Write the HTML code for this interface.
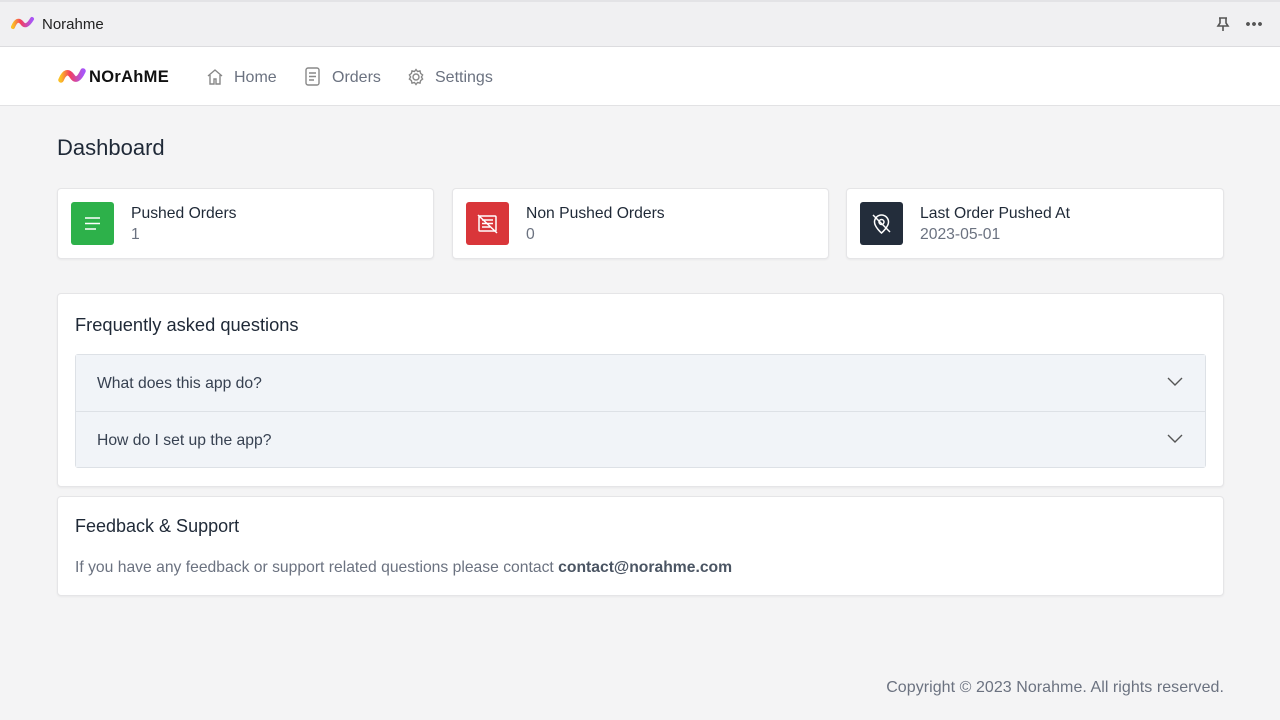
<!DOCTYPE html>
<html><head><meta charset="utf-8"><style>
*{box-sizing:border-box;margin:0;padding:0}
body{width:1280px;height:720px;background:#f4f4f5;font-family:"Liberation Sans",sans-serif;color:#1f2937;position:relative;overflow:hidden}
.top{position:absolute;left:0;top:0;width:1280px;height:47px;background:#f0f0f2;border-top:2px solid #e3e3e6;border-bottom:1px solid #dcdcdf}
.top .t{position:absolute;left:42px;top:14px;font-size:15px;color:#222}
.nav{position:absolute;left:0;top:47px;width:1280px;height:59px;background:#fff;border-bottom:1px solid #e2e2e4}
.nav .item{position:absolute;top:22px;font-size:16px;color:#6b7280}
.nav svg{position:absolute}
h1{position:absolute;left:57px;top:135px;font-size:22px;font-weight:normal;color:#1f2937}
.card{position:absolute;background:#fff;border:1px solid #e5e5e7;border-radius:4px;box-shadow:0 1px 2px rgba(0,0,0,.05)}
.ic{position:absolute;left:13px;top:13px;width:43px;height:43px;border-radius:3px}
.ct{position:absolute;left:73px;top:16px;font-size:15.7px;color:#1f2937}
.cv{position:absolute;left:73px;top:37px;font-size:15.7px;color:#6b7280}
.faq{position:absolute;left:75px;width:1131px;height:57px;background:#f1f4f8;font-size:15.7px;color:#374151}
.faq span{position:absolute;left:22px;top:20px}
.faq svg{position:absolute;right:22px;top:22px}
</style></head><body>
<div class="top">
<svg style="position:absolute;left:11px;top:13px" width="24" height="18" viewBox="0 0 24 18"><defs><linearGradient id="g" x1="0" x2="1"><stop offset="0" stop-color="#fbbf24"/><stop offset=".4" stop-color="#f43f5e"/><stop offset="1" stop-color="#a855f7"/></linearGradient></defs><path d="M2 12 Q6 2 11 8 Q15 14 21 4" stroke="url(#g)" stroke-width="4" fill="none" stroke-linecap="round"/></svg>
<div class="t">Norahme</div>
<svg style="position:absolute;left:1216px;top:14px" width="14" height="16" viewBox="0 0 14 16" fill="none" stroke="#555" stroke-width="1.6"><path d="M3 2h8M4 2v5l-2 3h10l-2-3V2M7 10v5"/></svg>
<div style="position:absolute;left:1245px;top:20px;width:18px;height:4px;background:radial-gradient(circle,#555 1.8px,transparent 2px) 0 0/6px 4px repeat-x"></div>
</div>
<div class="nav">
<svg style="left:58px;top:19px" width="28" height="22" viewBox="0 0 28 22"><path d="M3 14 Q8 2 14 10 Q19 18 25 5" stroke="url(#g)" stroke-width="5.5" fill="none" stroke-linecap="round"/></svg>
<div style="position:absolute;left:89px;top:21px;font-size:16.5px;font-weight:bold;color:#111;letter-spacing:.3px">NOrAhME</div>
<svg style="left:206px;top:21px" width="18" height="18" viewBox="0 0 18 18" fill="none" stroke="#888" stroke-width="1.4"><path d="M2 8 9 2l7 6M4 7v9h4v-5h2v5h4V7"/></svg>
<div class="item" style="left:234px">Home</div>
<svg style="left:305px;top:20px" width="15" height="19" viewBox="0 0 15 19" fill="none" stroke="#888" stroke-width="1.4"><rect x="1" y="1" width="13" height="17" rx="2"/><path d="M4 6h7M4 9.5h7M4 13h5"/></svg>
<div class="item" style="left:332px">Orders</div>
<svg style="left:407px;top:21px" width="18" height="18" viewBox="0 0 18 18" fill="none" stroke="#888" stroke-width="1.4"><circle cx="9" cy="9" r="3"/><path d="M9 1.5l1.5 2 2.5-.6.6 2.5 2 1.5-1.2 2.1 1.2 2.1-2 1.5-.6 2.5-2.5-.6L9 16.5l-1.5-2-2.5.6-.6-2.5-2-1.5L3.6 9 2.4 6.9l2-1.5.6-2.5 2.5.6z"/></svg>
<div class="item" style="left:435px">Settings</div>
</div>
<h1>Dashboard</h1>
<div class="card" style="left:57px;top:188px;width:377px;height:71px"><div class="ic" style="background:#2db14a"><svg width="43" height="43" viewBox="0 0 43 43" stroke="#fff" stroke-width="1.6"><path d="M14 16h15M14 21.5h15M14 27h11"/></svg></div><div class="ct">Pushed Orders</div><div class="cv">1</div></div>
<div class="card" style="left:452px;top:188px;width:377px;height:71px"><div class="ic" style="background:#d9363a"><svg width="43" height="43" viewBox="0 0 43 43" fill="none" stroke="#fff" stroke-width="1.5"><rect x="13" y="14" width="17" height="15" rx="1"/><path d="M16 18h11M16 21.5h11M16 25h8M12 13l19 18"/></svg></div><div class="ct">Non Pushed Orders</div><div class="cv">0</div></div>
<div class="card" style="left:846px;top:188px;width:378px;height:71px"><div class="ic" style="background:#232d3b"><svg width="43" height="43" viewBox="0 0 43 43" fill="none" stroke="#fff" stroke-width="1.5"><path d="M21.5 31s-7-6-7-11a7 7 0 0 1 14 0c0 5-7 11-7 11z"/><circle cx="21.5" cy="20" r="2.5"/><path d="M13 13l17 17"/></svg></div><div class="ct">Last Order Pushed At</div><div class="cv">2023-05-01</div></div>
<div class="card" style="left:57px;top:293px;width:1167px;height:194px">
<div style="position:absolute;left:17px;top:20px;font-size:18.3px">Frequently asked questions</div>
</div>
<div style="position:absolute;left:75px;top:354px;width:1131px;height:114px;border:1px solid #dde1e6;border-radius:3px;background:#f1f4f8"></div>
<div class="faq" style="top:355px;left:76px;width:1129px;height:56px"><span style="left:21px">What does this app do?</span><svg width="16" height="10" viewBox="0 0 16 10" fill="none" stroke="#555" stroke-width="1.4"><path d="M1 1l7 7 7-7"/></svg></div>
<div style="position:absolute;left:76px;top:411px;width:1129px;height:1px;background:#dde1e6"></div>
<div class="faq" style="top:412px;left:76px;width:1129px;height:55px"><span style="left:21px">How do I set up the app?</span><svg width="16" height="10" viewBox="0 0 16 10" fill="none" stroke="#555" stroke-width="1.4"><path d="M1 1l7 7 7-7"/></svg></div>
<div class="card" style="left:57px;top:496px;width:1167px;height:100px">
<div style="position:absolute;left:17px;top:19px;font-size:18px">Feedback &amp; Support</div>
<div style="position:absolute;left:17px;top:62px;font-size:15.7px;color:#6b7280">If you have any feedback or support related questions please contact <b style="color:#4b5563">contact@norahme.com</b></div>
</div>
<div style="position:absolute;right:56px;top:679px;font-size:16px;color:#6b7280;letter-spacing:.05px">Copyright © 2023 Norahme. All rights reserved.</div>
</body></html>
